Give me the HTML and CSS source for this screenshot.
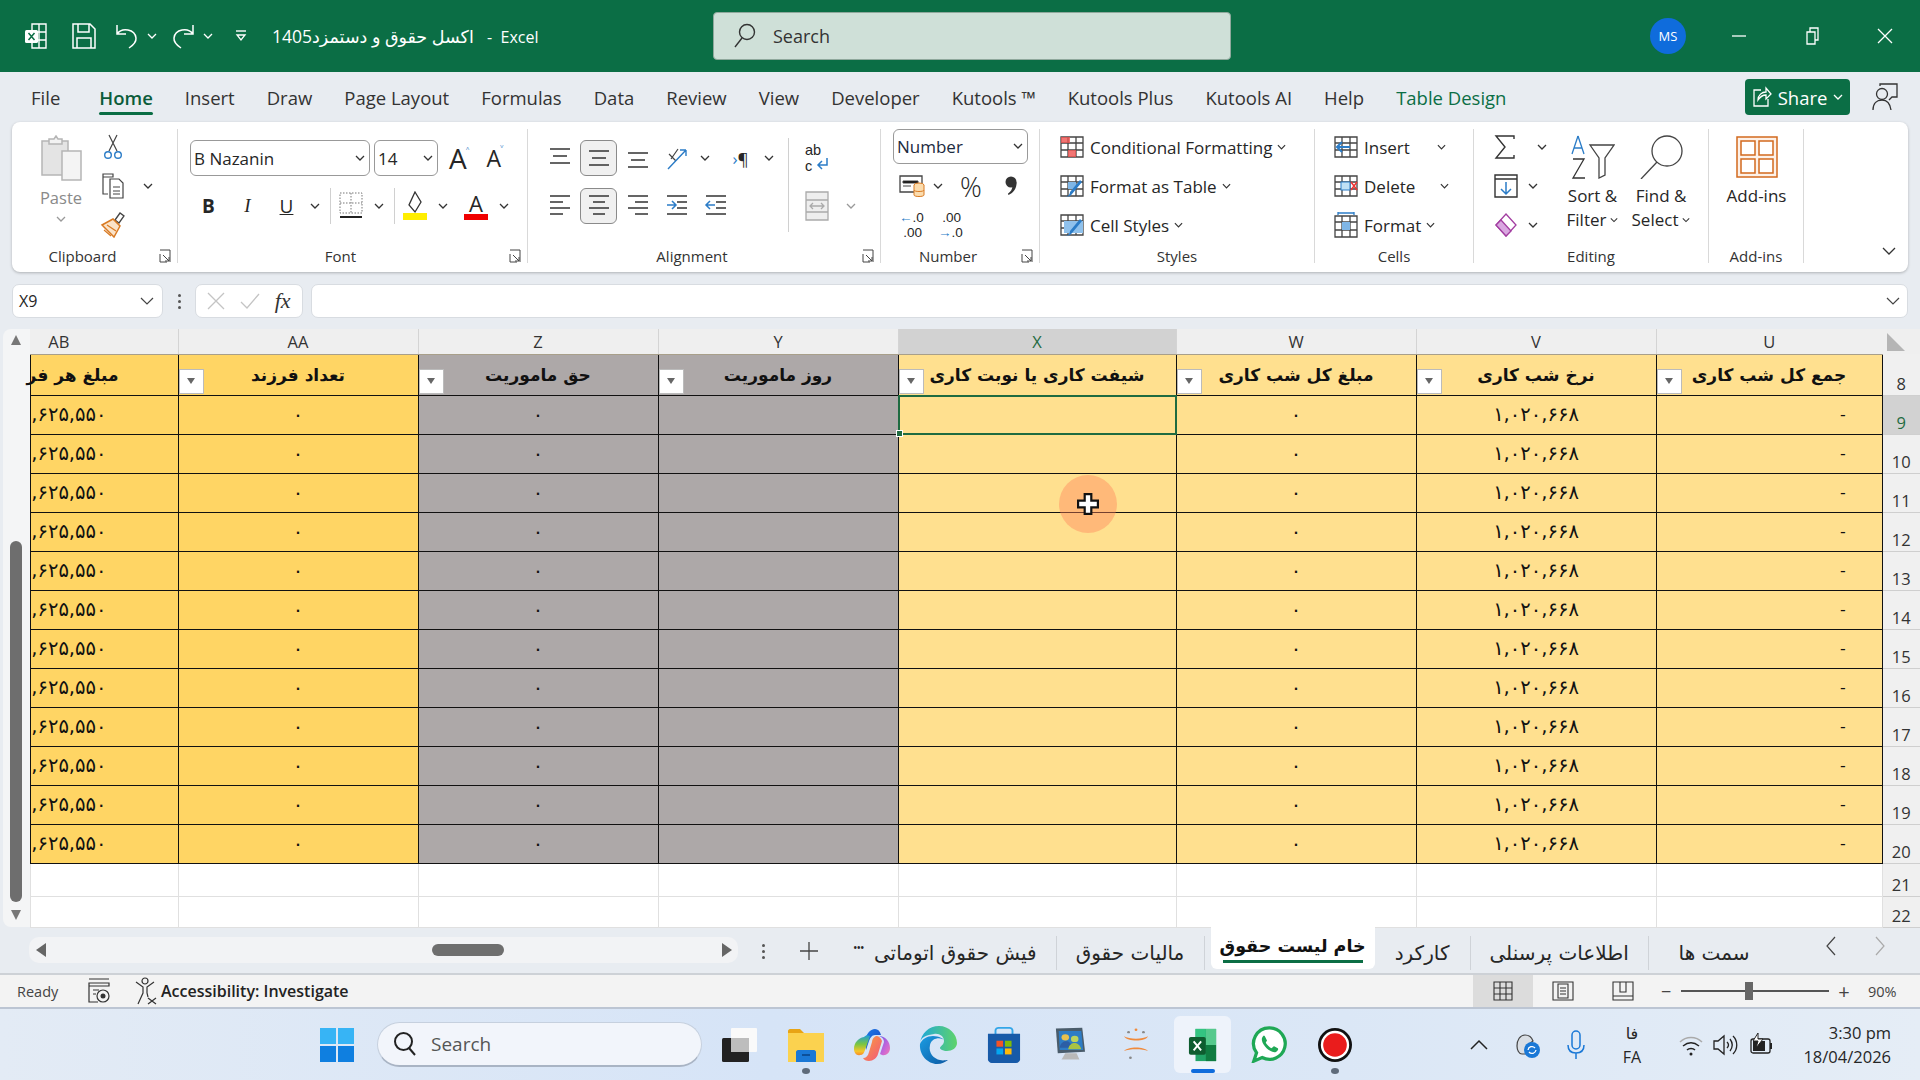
FILE: index.html
```html
<!DOCTYPE html>
<html lang="en">
<head>
    <meta charset="UTF-8">
    <title>Excel</title>
    <link rel="stylesheet" href="styles.css">
</head>
<body>
<svg class="defs" width="0" height="0">
    <defs>
        <linearGradient id="cp-left" x1="0" y1="0" x2="0" y2="1"><stop offset="0" stop-color="#1f9fd8"/><stop offset=".45" stop-color="#7cc63f"/><stop offset=".8" stop-color="#f7c52a"/><stop offset="1" stop-color="#f58a2b"/></linearGradient>
        <linearGradient id="cp-top" x1="0" y1="0" x2="1" y2="1"><stop offset="0" stop-color="#1d7be6"/><stop offset="1" stop-color="#1747c9"/></linearGradient>
        <linearGradient id="cp-right" x1="0" y1="0" x2="1" y2="1"><stop offset="0" stop-color="#6f5bea"/><stop offset=".6" stop-color="#c767d8"/><stop offset="1" stop-color="#f27ab0"/></linearGradient>
        <linearGradient id="cp-bot" x1="0" y1="0" x2="1" y2="1"><stop offset="0" stop-color="#f9a13a"/><stop offset="1" stop-color="#f2567e"/></linearGradient>
        <linearGradient id="edge-a" x1="0" y1="0" x2="1" y2="1"><stop offset="0" stop-color="#1b9de2"/><stop offset="1" stop-color="#0c59a4"/></linearGradient>
        <linearGradient id="edge-b" x1="0" y1="0" x2="1" y2="0"><stop offset="0" stop-color="#1fa8d8"/><stop offset="1" stop-color="#5fd36a"/></linearGradient>
    </defs>
    <symbol id="chev" viewBox="0 0 10 6"><path d="M1 1l4 4 4-4" fill="none" stroke="#333" stroke-width="1.3"/></symbol>
    <symbol id="lines-top" viewBox="0 0 24 24"><path d="M2 3h20M5 10h14M2 17h20" fill="none" stroke="#333" stroke-width="1.6"/></symbol>
    <symbol id="lines-mid" viewBox="0 0 24 24"><path d="M2 5h20M5 12h14M2 19h20" fill="none" stroke="#333" stroke-width="1.6"/></symbol>
    <symbol id="lines-bot" viewBox="0 0 24 24"><path d="M2 7h20M5 14h14M2 21h20" fill="none" stroke="#333" stroke-width="1.6"/></symbol>
    <symbol id="lines-left" viewBox="0 0 24 24"><path d="M2 2h20M2 8h13M2 14h20M2 20h13" fill="none" stroke="#333" stroke-width="1.6"/></symbol>
    <symbol id="lines-center" viewBox="0 0 24 24"><path d="M2 2h20M6 8h12M2 14h20M6 20h12" fill="none" stroke="#333" stroke-width="1.6"/></symbol>
    <symbol id="lines-right" viewBox="0 0 24 24"><path d="M2 2h20M9 8h13M2 14h20M9 20h13" fill="none" stroke="#333" stroke-width="1.6"/></symbol>
    <symbol id="table-grid" viewBox="0 0 24 24"><path d="M1 2h22v20H1zM1 8h22M1 15h22M8 2v20M16 2v20" fill="none" stroke="#444" stroke-width="1.3"/></symbol>
    <symbol id="filter-btn" viewBox="0 0 10 8"><path d="M1 1h8L5 7z" fill="#666"/></symbol>
    <symbol id="launcher" viewBox="0 0 12 14"><path d="M1 1h10v12M1 5v8h7M4 6l6 6M10 8v4H6" fill="none" stroke="#444" stroke-width="1"/></symbol>
</svg>

<header class="titlebar">
    <div class="qat">
        <svg class="qat-logo" width="24" height="26" viewBox="0 0 24 26"><path d="M8 1h14v24H8zM8 9h14M8 17h14M15 1v24" fill="none" stroke="#fff" stroke-width="1.4"/><rect x="1" y="7" width="13" height="13" rx="1.5" fill="#fff"/><path d="M4.5 10l6 7M10.5 10l-6 7" stroke="#0b6e45" stroke-width="1.5"/></svg>
        <svg class="qat-save" width="24" height="26" viewBox="0 0 24 26"><path d="M1 1h17l5 5v19H1zM6 1v8h11V1M5 25V15h14v10" fill="none" stroke="#fff" stroke-width="1.5"/></svg>
        <svg class="qat-undo" width="24" height="26" viewBox="0 0 24 26"><path d="M2 2v9h9M2 11c5-7 18-5 19 4 .5 5-4 8-7 10" fill="none" stroke="#fff" stroke-width="1.5"/></svg>
        <svg class="qat-chev" width="10" height="6"><path d="M1 1l4 4 4-4" fill="none" stroke="#fff" stroke-width="1.3"/></svg>
        <svg class="qat-redo" width="24" height="26" viewBox="0 0 24 26"><path d="M22 2v9h-9M22 11C17 4 4 6 3 15c-.5 5 4 8 7 10" fill="none" stroke="#fff" stroke-width="1.5"/></svg>
        <svg class="qat-chev" width="10" height="6"><path d="M1 1l4 4 4-4" fill="none" stroke="#fff" stroke-width="1.3"/></svg>
        <svg class="qat-custom" width="12" height="12" viewBox="0 0 12 12"><path d="M1 1h10" stroke="#fff" stroke-width="1.4"/><path d="M2 5h8L6 10z" fill="none" stroke="#fff" stroke-width="1.3"/></svg>
    </div>
    <div class="doc-title"><span class="doc-fa">اکسل حقوق و دستمزد1405</span>&nbsp; - &nbsp;Excel</div>
    <div class="searchbox">
        <svg width="24" height="26" viewBox="0 0 24 26"><circle cx="14" cy="9" r="7.5" fill="none" stroke="#333" stroke-width="1.4"/><path d="M9 15L2 24" stroke="#333" stroke-width="1.4"/></svg>
        <span>Search</span>
    </div>
    <div class="avatar">MS</div>
    <div class="winbtns">
        <svg width="16" height="16" viewBox="0 0 16 16"><path d="M1 8h14" stroke="#fff" stroke-width="1.3"/></svg>
        <svg width="16" height="18" viewBox="0 0 16 18"><path d="M3 5h8v12H3zM6 5V1h8v12h-3" fill="none" stroke="#fff" stroke-width="1.3"/></svg>
        <svg width="16" height="16" viewBox="0 0 16 16"><path d="M1 1l14 14M15 1L1 15" stroke="#fff" stroke-width="1.3"/></svg>
    </div>
</header>

<nav class="tabs">
    <a>File</a>
    <a class="tab-on">Home</a>
    <a>Insert</a>
    <a>Draw</a>
    <a>Page Layout</a>
    <a>Formulas</a>
    <a>Data</a>
    <a>Review</a>
    <a>View</a>
    <a>Developer</a>
    <a>Kutools ™</a>
    <a>Kutools Plus</a>
    <a>Kutools AI</a>
    <a>Help</a>
    <a class="tab-design">Table Design</a>
    <div class="share">
        <svg width="20" height="22" viewBox="0 0 20 22"><path d="M9 4H2v16h14v-7M6 14c0-5 4-8 8-8V2l5 6-5 5V9c-3 0-6 2-8 5z" fill="none" stroke="#fff" stroke-width="1.3"/></svg>
        <span>Share</span>
        <svg width="10" height="6"><path d="M1 1l4 4 4-4" fill="none" stroke="#fff" stroke-width="1.3"/></svg>
    </div>
    <svg class="comment-ic" width="26" height="28" viewBox="0 0 26 28"><circle cx="10" cy="11" r="5.5" fill="none" stroke="#333" stroke-width="1.3"/><path d="M1 27c0-7 4-10 9-10s8 3 9 10M8 3V1h17v13h-5l-3 3" fill="none" stroke="#333" stroke-width="1.3"/></svg>
</nav>

<section class="ribbon">
    <div class="group g-clip">
        <div class="grp-body">
            <div class="paste">
                <svg width="42" height="46" viewBox="0 0 42 46"><path d="M2 6h26v34H2z" fill="#e4e4e4" stroke="#b5b5b5" stroke-width="1.5"/><path d="M9 7V4h5l2-3 2 3h4v5H9z" fill="#f2f2f2" stroke="#b5b5b5" stroke-width="1.5"/><path d="M22 16h19v29H22z" fill="#f4f4f4" stroke="#b5b5b5" stroke-width="1.5"/></svg>
                <span class="paste-txt">Paste</span>
                <svg class="chev" width="10" height="6" viewBox="0 0 10 6"><path d="M1 1l4 4 4-4" fill="none" stroke="#999" stroke-width="1.3"/></svg>
            </div>
            <div class="rows3">
                <div class="row">
                    <svg class="ic26" width="26" height="26" viewBox="0 0 26 26"><path d="M9 1l8 16M17 1L9 17" stroke="#444" stroke-width="1.2"/><circle cx="8" cy="21" r="3.3" fill="none" stroke="#2b7cc7" stroke-width="1.4"/><circle cx="18" cy="21" r="3.3" fill="none" stroke="#2b7cc7" stroke-width="1.4"/></svg>
                </div>
                <div class="row">
                    <svg class="ic26" width="26" height="26" viewBox="0 0 26 26"><path d="M3 1h10v3H3zM3 1v20h5M10 6h9l4 4v15H10zM13 14h7M13 18h7M13 21h7" fill="none" stroke="#444" stroke-width="1.2"/></svg>
                    <svg class="chev chev-copy" width="10" height="6"><use href="#chev"/></svg>
                </div>
                <div class="row">
                    <svg class="ic26" width="26" height="26" viewBox="0 0 26 26"><path d="M15 8l5-7 4 3-5 7z" fill="none" stroke="#444" stroke-width="1.3"/><path d="M2 13l11-6 7 7-6 11z" fill="#fbe3c8" stroke="#d97a22" stroke-width="1.5"/><path d="M7 13l9 6M4 18l7 6" stroke="#d97a22" stroke-width="1.2"/></svg>
                </div>
            </div>
        </div>
        <div class="grp-foot"><span class="grp-name">Clipboard</span><span class="launch"><svg width="12" height="14"><use href="#launcher"/></svg></span></div>
    </div>

    <div class="group g-font">
        <div class="grp-body rows2">
            <div class="row">
                <div class="combo combo-font">B Nazanin<svg width="10" height="6"><use href="#chev"/></svg></div>
                <div class="combo combo-size">14<svg width="10" height="6"><use href="#chev"/></svg></div>
                <span class="grow-a">A<sup>˄</sup></span>
                <span class="shrink-a">A<sup>˅</sup></span>
            </div>
            <div class="row row-font2">
                <span class="slot fmt-b">B</span>
                <span class="slot fmt-i">I</span>
                <span class="slot fmt-u">U</span>
                <span class="chev-slot"><svg width="10" height="6"><use href="#chev"/></svg></span>
                <i class="vsep"></i>
                <svg width="24" height="28" viewBox="0 0 24 28"><path d="M1 1h22v20H1zM12 1v20M1 11h22" fill="none" stroke="#777" stroke-width="1" stroke-dasharray="1.5 1.5"/><path d="M1 25h22" stroke="#222" stroke-width="2"/></svg>
                <span class="chev-slot"><svg width="10" height="6"><use href="#chev"/></svg></span>
                <i class="vsep"></i>
                <svg width="24" height="30" viewBox="0 0 24 30"><path d="M12 1l6 10-6 10-6-7z" fill="none" stroke="#333" stroke-width="1.3"/><path d="M0 22h24v7H0z" fill="#ffee00"/></svg>
                <span class="chev-slot"><svg width="10" height="6"><use href="#chev"/></svg></span>
                <span class="font-color"><b>A</b><i></i></span>
                <span class="chev-slot"><svg width="10" height="6"><use href="#chev"/></svg></span>
            </div>
        </div>
        <div class="grp-foot"><span class="grp-name">Font</span><span class="launch"><svg width="12" height="14"><use href="#launcher"/></svg></span></div>
    </div>

    <div class="group g-align">
        <div class="grp-body">
            <div class="rows2">
                <div class="row">
                    <span class="slot"><svg width="24" height="24"><use href="#lines-top"/></svg></span>
                    <span class="slot slot-on"><svg width="24" height="24"><use href="#lines-mid"/></svg></span>
                    <span class="slot"><svg width="24" height="24"><use href="#lines-bot"/></svg></span>
                    <span class="slot"><svg width="26" height="26" viewBox="0 0 26 26"><path d="M7 14L14 4M5 9l7 7" fill="none" stroke="#444" stroke-width="1.2"/><path d="M4 24L22 5M22 5h-6M22 5v6" fill="none" stroke="#2b7cc7" stroke-width="1.4"/></svg></span>
                    <span class="chev-slot"><svg width="10" height="6"><use href="#chev"/></svg></span>
                    <span class="slot slot-para"><span class="para-blue">›</span>¶</span>
                    <span class="chev-slot"><svg width="10" height="6"><use href="#chev"/></svg></span>
                </div>
                <div class="row">
                    <span class="slot"><svg width="24" height="24"><use href="#lines-left"/></svg></span>
                    <span class="slot slot-on"><svg width="24" height="24"><use href="#lines-center"/></svg></span>
                    <span class="slot"><svg width="24" height="24"><use href="#lines-right"/></svg></span>
                    <span class="slot"><svg width="24" height="24" viewBox="0 0 24 24"><path d="M2 2h20M12 8h10M12 14h10M2 20h20" stroke="#333" stroke-width="1.5"/><path d="M2 11h8M7 7l4 4-4 4" fill="none" stroke="#2b7cc7" stroke-width="1.5"/></svg></span>
                    <span class="slot"><svg width="24" height="24" viewBox="0 0 24 24"><path d="M2 2h20M12 8h10M12 14h10M2 20h20" stroke="#333" stroke-width="1.5"/><path d="M11 11H2M6 7l-4 4 4 4" fill="none" stroke="#2b7cc7" stroke-width="1.5"/></svg></span>
                </div>
            </div>
            <i class="tall-sep"></i>
            <div class="rows2">
                <div class="row">
                    <span class="wrap-txt">ab<br>c</span>
                    <svg class="wrap-arrow" width="14" height="14" viewBox="0 0 14 14"><path d="M12 1v7H3M7 4L3 8l4 4" fill="none" stroke="#2b7cc7" stroke-width="1.5"/></svg>
                </div>
                <div class="row">
                    <svg width="24" height="30" viewBox="0 0 24 30"><path d="M1 1h22v28H1zM1 9h22M1 21h22" fill="#eee" stroke="#aaa" stroke-width="1.3"/><path d="M5 15h14M8 12l-3 3 3 3M16 12l3 3-3 3" fill="none" stroke="#aaa" stroke-width="1.3"/></svg>
                    <span class="chev-merge"><svg width="10" height="6" viewBox="0 0 10 6"><path d="M1 1l4 4 4-4" fill="none" stroke="#999" stroke-width="1.3"/></svg></span>
                </div>
            </div>
        </div>
        <div class="grp-foot"><span class="grp-name">Alignment</span><span class="launch"><svg width="12" height="14"><use href="#launcher"/></svg></span></div>
    </div>

    <div class="group g-number">
        <div class="grp-body rows3">
            <div class="row"><div class="combo combo-num">Number<svg width="10" height="6"><use href="#chev"/></svg></div></div>
            <div class="row num-row2">
                <svg width="26" height="24" viewBox="0 0 26 24"><path d="M1 2h22v16H1z" fill="none" stroke="#444" stroke-width="1.3"/><path d="M4 7h15v2H4zM4 12h8" stroke="#444"/><ellipse cx="20" cy="11" rx="5" ry="2" fill="#fbdcae" stroke="#d97a22"/><path d="M15 11v10c0 2 10 2 10 0V11M15 16c0 2 10 2 10 0" fill="#fbdcae" stroke="#d97a22"/></svg>
                <span class="chev-slot"><svg width="10" height="6"><use href="#chev"/></svg></span>
                <span class="percent">%</span>
                <svg class="comma" width="12" height="20" viewBox="0 0 12 20"><circle cx="6" cy="6" r="5.5" fill="#333"/><path d="M11.5 6c.5 6-3 11-8 13l-.6-1.2c3-2 4.600-5 4.600-8z" fill="#333"/></svg>
            </div>
            <div class="row num-row3">
                <span class="dec"><em>←</em>.0<br>.00</span>
                <span class="dec">.00<br><em>→</em>.0</span>
            </div>
        </div>
        <div class="grp-foot"><span class="grp-name">Number</span><span class="launch"><svg width="12" height="14"><use href="#launcher"/></svg></span></div>
    </div>

    <div class="group g-styles">
        <div class="grp-body rows3">
            <div class="row">
                <svg width="24" height="24" viewBox="0 0 24 24"><use href="#table-grid"/><path d="M1 2h9v6H1zM8 15h8v7H8z" fill="#ef5350" opacity=".8"/></svg>
                <span class="cmd">Conditional Formatting</span><svg class="cmd-chev" width="10" height="6"><use href="#chev"/></svg>
            </div>
            <div class="row">
                <svg width="24" height="24" viewBox="0 0 24 24"><use href="#table-grid"/><path d="M8 8h8v7H8z" fill="#7fb6e6"/><path d="M5 23c3 0 5-3 5-5l10-12 2 2-10 12c-1 2-4 3-7 3z" fill="#2b7cc7"/></svg>
                <span class="cmd">Format as Table</span><svg class="cmd-chev" width="10" height="6"><use href="#chev"/></svg>
            </div>
            <div class="row">
                <svg width="24" height="24" viewBox="0 0 24 24"><use href="#table-grid"/><path d="M4 8h19v12H4z" fill="#8fc1ec"/><path d="M5 23c3 0 5-3 5-5l10-12 2 2-10 12c-1 2-4 3-7 3z" fill="#2b7cc7"/></svg>
                <span class="cmd">Cell Styles</span><svg class="cmd-chev" width="10" height="6"><use href="#chev"/></svg>
            </div>
        </div>
        <div class="grp-foot"><span class="grp-name">Styles</span></div>
    </div>

    <div class="group g-cells">
        <div class="grp-body rows3">
            <div class="row">
                <svg width="24" height="24" viewBox="0 0 24 24"><use href="#table-grid"/><path d="M16 12H3M8 7l-5 5 5 5" fill="none" stroke="#2b7cc7" stroke-width="2"/></svg>
                <span class="cmd">Insert</span><svg class="cmd-chev chev-ins" width="10" height="6"><use href="#chev"/></svg>
            </div>
            <div class="row">
                <svg width="24" height="24" viewBox="0 0 24 24"><use href="#table-grid"/><rect x="7" y="8" width="9" height="8" fill="#bfe0f5" stroke="#2b7cc7"/><path d="M17 8l6 8M23 8l-6 8" stroke="#e33" stroke-width="1.5"/></svg>
                <span class="cmd">Delete</span><svg class="cmd-chev chev-del" width="10" height="6"><use href="#chev"/></svg>
            </div>
            <div class="row">
                <svg width="24" height="26" viewBox="0 0 24 26"><path d="M1 4h22v21H1zM1 10h22M1 18h22M8 4v21M16 4v21" fill="none" stroke="#444" stroke-width="1.3"/><path d="M8 10h8v8H8z" fill="#7fb6e6"/><path d="M4 1h16M4 0v3M20 0v3" stroke="#2b7cc7" stroke-width="1.3"/></svg>
                <span class="cmd">Format</span><svg class="cmd-chev" width="10" height="6"><use href="#chev"/></svg>
            </div>
        </div>
        <div class="grp-foot"><span class="grp-name">Cells</span></div>
    </div>

    <div class="group g-edit">
        <div class="grp-body">
            <div class="rows3 edit-col">
                <div class="row"><svg width="22" height="24" viewBox="0 0 22 24"><path d="M20 4V1H2l9 11-9 11h18v-3" fill="none" stroke="#333" stroke-width="1.4"/></svg><svg class="chev-sum" width="10" height="6"><use href="#chev"/></svg></div>
                <div class="row"><svg width="24" height="24" viewBox="0 0 24 24"><path d="M1 1h22v22H1zM1 5h22" fill="none" stroke="#333" stroke-width="1.4"/><path d="M12 8v12M7 15l5 5 5-5" fill="none" stroke="#2b7cc7" stroke-width="1.5"/></svg><svg class="chev-fill" width="10" height="6"><use href="#chev"/></svg></div>
                <div class="row"><svg width="24" height="24" viewBox="0 0 24 24"><path d="M12 1l10 11-10 11L2 12z" fill="#fff" stroke="#a33ea1" stroke-width="1.3"/><path d="M2 12l5-5 10 11-5 5z" fill="#d9a7e0" stroke="#a33ea1" stroke-width="1.3"/></svg><svg class="chev-fill" width="10" height="6"><use href="#chev"/></svg></div>
            </div>
            <div class="bigbtn big-sort">
                <svg class="bigicon" width="44" height="44" viewBox="0 0 44 44"><path d="M19 10h24l-9 13v17l-6 3V23z" fill="none" stroke="#444" stroke-width="1.3"/><path d="M7 1L1 19M7 1l6 18M3 13h8" fill="none" stroke="#2b7cc7" stroke-width="1.3"/><path d="M2 24h11L2 43h12" fill="none" stroke="#333" stroke-width="1.3"/></svg>
                <span>Sort &amp;</span>
                <span>Filter<svg width="8" height="6"><use href="#chev"/></svg></span>
            </div>
            <div class="bigbtn big-find">
                <svg class="bigicon" width="46" height="44" viewBox="0 0 46 44"><circle cx="29" cy="16" r="15" fill="none" stroke="#444" stroke-width="1.3"/><path d="M19 27L3 44" stroke="#444" stroke-width="1.3"/></svg>
                <span>Find &amp;</span>
                <span>Select<svg width="8" height="6"><use href="#chev"/></svg></span>
            </div>
        </div>
        <div class="grp-foot"><span class="grp-name">Editing</span></div>
    </div>

    <div class="group g-addins">
        <div class="grp-body">
            <div class="bigbtn big-add">
                <svg class="bigicon" width="42" height="42" viewBox="0 0 42 42"><rect x="1" y="1" width="40" height="40" fill="#fdf1e8" stroke="#d2691e" stroke-width="1.5"/><path d="M5 5h14v14H5zM23 5h14v14H23zM5 23h14v14H5zM23 23h14v14H23z" fill="#fff" stroke="#d2691e" stroke-width="1.5"/></svg>
                <span>Add-ins</span>
            </div>
        </div>
        <div class="grp-foot"><span class="grp-name">Add-ins</span></div>
    </div>

    <svg class="collapse" width="14" height="9" viewBox="0 0 14 9"><path d="M1 1l6 6 6-6" fill="none" stroke="#333" stroke-width="1.3"/></svg>
</section>

<section class="formula">
    <div class="namebox"><span>X9</span><svg width="14" height="8" viewBox="0 0 14 8"><path d="M1 1l6 6 6-6" fill="none" stroke="#444" stroke-width="1.2"/></svg></div>
    <div class="fdots"><i></i><i></i><i></i></div>
    <div class="fxbox">
        <svg width="18" height="18" viewBox="0 0 18 18"><path d="M1 1l16 16M17 1L1 17" stroke="#c4c4c4" stroke-width="1.3"/></svg>
        <svg width="20" height="16" viewBox="0 0 20 16"><path d="M1 9l6 6L19 1" fill="none" stroke="#c4c4c4" stroke-width="1.3"/></svg>
        <span class="fx">fx</span>
    </div>
    <div class="finput"><svg width="14" height="8" viewBox="0 0 14 8"><path d="M1 1l6 6 6-6" fill="none" stroke="#444" stroke-width="1.2"/></svg></div>
</section>

<section class="sheet">
    <div class="vscroll">
        <svg width="12" height="10" viewBox="0 0 12 10"><path d="M1 10L6 0l5 10z" fill="#777"/></svg>
        <div class="vthumb"></div>
        <svg width="12" height="10" viewBox="0 0 12 10"><path d="M1 0h10L6 10z" fill="#777"/></svg>
    </div>
    <table class="grid">
        <colgroup>
            <col class="c-ab"><col class="c-std"><col class="c-std"><col class="c-std"><col class="c-x"><col class="c-std"><col class="c-std"><col class="c-u"><col class="c-num">
        </colgroup>
        <tr class="letters">
            <th class="col-ab">AB</th><th>AA</th><th>Z</th><th>Y</th><th class="sel-head">X</th><th>W</th><th>V</th><th>U</th>
            <th class="corner"><svg width="18" height="18" viewBox="0 0 18 18"><path d="M0 0l18 18H0z" fill="#b5b5b5"/></svg></th>
        </tr>
        <tr class="heads">
            <td><div class="clip">مبلغ هر فر</div></td>
            <td><i class="fbtn"><svg width="10" height="8"><use href="#filter-btn"/></svg></i>تعداد فرزند</td>
            <td class="gray"><i class="fbtn"><svg width="10" height="8"><use href="#filter-btn"/></svg></i>حق ماموریت</td>
            <td class="gray"><i class="fbtn"><svg width="10" height="8"><use href="#filter-btn"/></svg></i>روز ماموریت</td>
            <td class="light"><i class="fbtn"><svg width="10" height="8"><use href="#filter-btn"/></svg></i>شیفت کاری یا نوبت کاری</td>
            <td class="light"><i class="fbtn"><svg width="10" height="8"><use href="#filter-btn"/></svg></i>مبلغ کل شب کاری</td>
            <td class="light"><i class="fbtn"><svg width="10" height="8"><use href="#filter-btn"/></svg></i>نرخ شب کاری</td>
            <td class="light"><i class="fbtn"><svg width="10" height="8"><use href="#filter-btn"/></svg></i>جمع کل شب کاری</td>
            <td class="rownum">8</td>
        </tr>
        <tr class="data"><td><div class="clip num-clip">,۶۲۵,۵۵۰</div></td><td>۰</td><td class="gray">۰</td><td class="gray"></td><td class="light sel-cell"><div class="sel-box"><i></i></div></td><td class="light">۰</td><td class="light">۱,۰۲۰,۶۶۸</td><td class="light dash">-</td><td class="rownum sel-num">9</td></tr>
        <tr class="data"><td><div class="clip num-clip">,۶۲۵,۵۵۰</div></td><td>۰</td><td class="gray">۰</td><td class="gray"></td><td class="light"></td><td class="light">۰</td><td class="light">۱,۰۲۰,۶۶۸</td><td class="light dash">-</td><td class="rownum">10</td></tr>
        <tr class="data"><td><div class="clip num-clip">,۶۲۵,۵۵۰</div></td><td>۰</td><td class="gray">۰</td><td class="gray"></td><td class="light cursor-cell"><div class="cursor"><svg width="22" height="22" viewBox="0 0 20 20"><path d="M7 1h6v6h6v6h-6v6H7v-6H1V7h6z" fill="#fff" stroke="#111" stroke-width="2"/></svg></div></td><td class="light">۰</td><td class="light">۱,۰۲۰,۶۶۸</td><td class="light dash">-</td><td class="rownum">11</td></tr>
        <tr class="data"><td><div class="clip num-clip">,۶۲۵,۵۵۰</div></td><td>۰</td><td class="gray">۰</td><td class="gray"></td><td class="light"></td><td class="light">۰</td><td class="light">۱,۰۲۰,۶۶۸</td><td class="light dash">-</td><td class="rownum">12</td></tr>
        <tr class="data"><td><div class="clip num-clip">,۶۲۵,۵۵۰</div></td><td>۰</td><td class="gray">۰</td><td class="gray"></td><td class="light"></td><td class="light">۰</td><td class="light">۱,۰۲۰,۶۶۸</td><td class="light dash">-</td><td class="rownum">13</td></tr>
        <tr class="data"><td><div class="clip num-clip">,۶۲۵,۵۵۰</div></td><td>۰</td><td class="gray">۰</td><td class="gray"></td><td class="light"></td><td class="light">۰</td><td class="light">۱,۰۲۰,۶۶۸</td><td class="light dash">-</td><td class="rownum">14</td></tr>
        <tr class="data"><td><div class="clip num-clip">,۶۲۵,۵۵۰</div></td><td>۰</td><td class="gray">۰</td><td class="gray"></td><td class="light"></td><td class="light">۰</td><td class="light">۱,۰۲۰,۶۶۸</td><td class="light dash">-</td><td class="rownum">15</td></tr>
        <tr class="data"><td><div class="clip num-clip">,۶۲۵,۵۵۰</div></td><td>۰</td><td class="gray">۰</td><td class="gray"></td><td class="light"></td><td class="light">۰</td><td class="light">۱,۰۲۰,۶۶۸</td><td class="light dash">-</td><td class="rownum">16</td></tr>
        <tr class="data"><td><div class="clip num-clip">,۶۲۵,۵۵۰</div></td><td>۰</td><td class="gray">۰</td><td class="gray"></td><td class="light"></td><td class="light">۰</td><td class="light">۱,۰۲۰,۶۶۸</td><td class="light dash">-</td><td class="rownum">17</td></tr>
        <tr class="data"><td><div class="clip num-clip">,۶۲۵,۵۵۰</div></td><td>۰</td><td class="gray">۰</td><td class="gray"></td><td class="light"></td><td class="light">۰</td><td class="light">۱,۰۲۰,۶۶۸</td><td class="light dash">-</td><td class="rownum">18</td></tr>
        <tr class="data"><td><div class="clip num-clip">,۶۲۵,۵۵۰</div></td><td>۰</td><td class="gray">۰</td><td class="gray"></td><td class="light"></td><td class="light">۰</td><td class="light">۱,۰۲۰,۶۶۸</td><td class="light dash">-</td><td class="rownum">19</td></tr>
        <tr class="data"><td><div class="clip num-clip">,۶۲۵,۵۵۰</div></td><td>۰</td><td class="gray">۰</td><td class="gray"></td><td class="light"></td><td class="light">۰</td><td class="light">۱,۰۲۰,۶۶۸</td><td class="light dash">-</td><td class="rownum">20</td></tr>
        <tr class="blank r21"><td></td><td></td><td></td><td></td><td></td><td></td><td></td><td></td><td class="rownum">21</td></tr>
        <tr class="blank r22"><td></td><td></td><td></td><td></td><td></td><td></td><td></td><td></td><td class="rownum">22</td></tr>
    </table>
</section>

<section class="sheetbar">
    <div class="hscroll">
        <svg width="10" height="14" viewBox="0 0 10 14"><path d="M10 0v14L0 7z" fill="#666"/></svg>
        <div class="hthumb"></div>
        <svg width="10" height="14" viewBox="0 0 10 14"><path d="M0 0v14l10-7z" fill="#666"/></svg>
    </div>
    <div class="vdots"><i></i><i></i><i></i></div>
    <svg class="addsheet" width="18" height="18" viewBox="0 0 18 18"><path d="M9 0v18M0 9h18" stroke="#444" stroke-width="1.3"/></svg>
    <span class="moretabs">•••</span>
    <div class="sheet-tabs">
        <div class="stab st-fish">فیش حقوق اتوماتی</div>
        <div class="stab st-tax">مالیات حقوق</div>
        <div class="stab st-raw">خام لیست حقوق</div>
        <div class="stab st-work">کارکرد</div>
        <div class="stab st-info">اطلاعات پرسنلی</div>
        <div class="stab st-role">سمت ها</div>
    </div>
    <svg class="tabarrow" width="10" height="20" viewBox="0 0 10 20"><path d="M9 1L1 10l8 9" fill="none" stroke="#444" stroke-width="1.2"/></svg>
    <svg class="tabarrow tabarrow2" width="10" height="20" viewBox="0 0 10 20"><path d="M1 1l8 9-8 9" fill="none" stroke="#aaa" stroke-width="1.2"/></svg>
</section>

<footer class="statusbar">
    <span class="ready">Ready</span>
    <svg class="st-ic" width="22" height="26" viewBox="0 0 22 26"><path d="M1 1h20M1 5h20v3H1zM1 8v16h9M5 12h6M5 16h3" fill="none" stroke="#333" stroke-width="1.2"/><circle cx="15" cy="18" r="6" fill="none" stroke="#333" stroke-width="1.2"/><circle cx="15" cy="18" r="2.5" fill="#333"/></svg>
    <svg class="st-acc" width="24" height="28" viewBox="0 0 24 28"><circle cx="11" cy="4" r="3" fill="none" stroke="#333" stroke-width="1.2"/><path d="M2 5l7 5v6L4 27M20 5l-7 5v6l1 4M14 21l8 6M22 21l-8 6" fill="none" stroke="#333" stroke-width="1.2"/></svg>
    <b class="acc-txt">Accessibility: Investigate</b>
    <div class="viewbtns">
        <span class="vb vb-on"><svg width="20" height="20" viewBox="0 0 20 20"><path d="M1 1h18v18H1zM1 7h18M1 13h18M7 1v18M13 1v18" fill="none" stroke="#333" stroke-width="1.1"/></svg></span>
        <span class="vb"><svg width="22" height="20" viewBox="0 0 22 20"><path d="M1 1h20v18H1z" fill="none" stroke="#333" stroke-width="1.1"/><path d="M6 3h10v14H6zM8 7h6M8 10h6M8 13h6" fill="none" stroke="#333" stroke-width="1.1"/></svg></span>
        <span class="vb"><svg width="22" height="20" viewBox="0 0 22 20"><path d="M1 1h20v18H1zM8 1v10h6V1M1 15h20" fill="none" stroke="#333" stroke-width="1.1"/></svg></span>
    </div>
    <span class="zoom-minus">−</span>
    <div class="zoomtrack"><i></i></div>
    <span class="zoom-plus">+</span>
    <span class="zoom-val">90%</span>
</footer>

<footer class="taskbar">
    <div class="app"><svg width="36" height="36" viewBox="0 0 36 36"><path d="M1 1h16v16H1z" fill="#37b4f5"/><path d="M19 1h16v16H19z" fill="#37b4f5"/><path d="M1 19h16v16H1z" fill="#0f7fe0"/><path d="M19 19h16v16H19z" fill="#0f7fe0"/></svg></div>
    <div class="tsearch">
        <svg width="24" height="26" viewBox="0 0 24 26"><circle cx="10.5" cy="10.5" r="8.5" fill="none" stroke="#222" stroke-width="2"/><path d="M16 17l6 7" stroke="#222" stroke-width="2"/></svg>
        <span>Search</span>
    </div>
    <div class="app"><svg width="36" height="34" viewBox="0 0 36 34"><rect x="9" y="0" width="26" height="24" rx="1" fill="#fafafa"/><rect x="0" y="10" width="27" height="24" rx="1.5" fill="#222"/><rect x="9" y="10" width="18" height="14" fill="#bdbdbd"/></svg></div>
    <div class="app app-dot"><svg width="38" height="34" viewBox="0 0 38 34"><path d="M1 3c0-1 1-2 2-2h10l4 4h-16z" fill="#e8a415"/><path d="M1 5h36v29H1z" fill="#fbd24f"/><path d="M9 24c0-1 1-2 2-2h16c1 0 2 1 2 2v10H9z" fill="#1a78d6"/><path d="M15 27h8" stroke="#0c4f99" stroke-width="2"/></svg></div>
    <div class="app"><svg width="36" height="34" viewBox="0 0 36 34"><path d="M11 13c1-7 5-12 10-12 3 0 5 2 6 6l-6 0c-3 0-5 3-6 6l-3 9z" fill="url(#cp-top)"/><path d="M10 9C4 10 0 15 0 21c0 4 3 7 6 6 3 0 4-2 5-5l5-14c-2-1-4-1-6 1z" fill="url(#cp-left)"/><path d="M25 8c6 0 11 5 11 12 0 5-4 8-8 7l-2-1 4-12c0-3-2-5-5-6z" fill="url(#cp-right)"/><path d="M22 8c3 0 5 2 6 5l-4 13c-1 4-5 7-9 7-3 0-5-1-6-3 3 0 5-2 6-6l3-10c0-3 2-5 4-6z" fill="url(#cp-bot)"/></svg></div>
    <div class="app"><svg width="38" height="38" viewBox="0 0 38 38"><path d="M1 18C2 7 10 0 20 0c10 0 18 8 18 17 0 5-5 8-10 8-4 0-7-2-7-3 0-2 4-3 4-7 0-5-5-8-10-7C8 9 1 11 1 18z" fill="url(#edge-b)"/><path d="M1 18c2-5 7-8 13-8s11 3 12 5c-3-4-13-4-15 4-2 8 4 14 10 15 3 1 6 0 8 0-3 2-6 4-11 4C9 38 0 29 1 18z" fill="url(#edge-a)"/></svg></div>
    <div class="app"><svg width="34" height="36" viewBox="0 0 36 42" preserveAspectRatio="none"><path d="M9 10V4c0-2 2-3 3-3h12c1 0 3 1 3 3v6" fill="none" stroke="#33a6e8" stroke-width="2"/><path d="M1 8h34v30c0 2-2 4-4 4H5c-2 0-4-2-4-4z" fill="#175aa8"/><path d="M10 16h7v7h-7z" fill="#f35325"/><path d="M19 16h7v7h-7z" fill="#81bc06"/><path d="M10 25h7v7h-7z" fill="#05a6f0"/><path d="M19 25h7v7h-7z" fill="#ffba08"/></svg></div>
    <div class="app"><svg width="32" height="35" viewBox="0 0 34 44" preserveAspectRatio="none"><path d="M2 2l28-1 3 30L4 33z" fill="#4a5c6b"/><path d="M5 5h24l2 24H6z" fill="#2d7cc5"/><circle cx="12" cy="13" r="4" fill="#e8c14f"/><path d="M6 26c1-6 4-8 7-8s5 2 6 8z" fill="#2b5ea6"/><circle cx="22" cy="15" r="4" fill="#bcd35c"/><path d="M15 28c1-6 4-8 7-8s6 3 7 8z" fill="#a8c344"/><path d="M12 33h12l3 8H8z" fill="#b9b9b9"/></svg></div>
    <div class="app"><svg width="26" height="33" viewBox="0 0 28 40" preserveAspectRatio="none"><path d="M1 10c6 4 20 4 26 0-3 7-22 7-26 0zM1 28c4-6 22-6 26 0-6-3-20-3-26 0z" fill="#f08a3c"/><circle cx="6" cy="5" r="1.5" fill="#888"/><circle cx="14" cy="2" r="1.5" fill="#f08a3c"/><circle cx="22" cy="5" r="1.5" fill="#888"/><circle cx="8" cy="36" r="1.5" fill="#888"/></svg></div>
    <div class="app app-excel"><svg width="30" height="34" viewBox="0 0 32 38" preserveAspectRatio="none"><path d="M8 1h22v36H8z" fill="#21a366"/><path d="M19 1h11v18H19z" fill="#56c98d"/><path d="M8 1h11v18H8z" fill="#33c481"/><path d="M19 19h11v18H19z" fill="#107c41"/><rect x="1" y="10" width="18" height="20" rx="2" fill="#0e5c2f"/><path d="M6 15l8 10M14 15L6 25" stroke="#fff" stroke-width="2"/></svg></div>
    <div class="app"><svg width="37" height="37" viewBox="0 0 38 40"><path d="M19 2a17 17 0 11-8 32L2 38l3-9A17 17 0 0119 2z" fill="#fff" stroke="#1fa855" stroke-width="3.5"/><path d="M12 11c-2 2-2 6 2 11s9 7 12 6c2-1 3-3 2-4l-4-2c-1 0-2 2-3 2-2-1-5-4-6-6 0-1 2-2 1-3l-2-4c-1-1-1-1-2 0z" fill="#1fa855"/></svg></div>
    <div class="app app-dot"><svg width="34" height="34" viewBox="0 0 36 36"><circle cx="18" cy="18" r="18" fill="#111"/><circle cx="18" cy="18" r="15" fill="#fff"/><circle cx="18" cy="18" r="12.5" fill="#ea1c1c"/></svg></div>
    <div class="tray">
        <svg class="tray-up" width="18" height="11" viewBox="0 0 18 11"><path d="M1 10l8-8 8 8" fill="none" stroke="#222" stroke-width="1.5"/></svg>
        <svg class="tray-cloud" width="26" height="30" viewBox="0 0 26 30"><path d="M2 16c0-6 3-11 8-11s7 3 8 6c-4 2-6 7-5 13H7c-3 0-5-4-5-8z" fill="#d9dee4" stroke="#444" stroke-width="1.2"/><circle cx="17" cy="20" r="8" fill="#1a78d6"/><path d="M13 20a4 4 0 017-2M21 20a4 4 0 01-7 2" fill="none" stroke="#fff" stroke-width="1.3"/></svg>
        <svg class="tray-mic" width="18" height="30" viewBox="0 0 18 30"><rect x="5" y="1" width="8" height="18" rx="4" fill="none" stroke="#1a78d6" stroke-width="1.5"/><path d="M1 15c0 5 3 8 8 8s8-3 8-8M9 23v6" fill="none" stroke="#1a78d6" stroke-width="1.5"/></svg>
        <div class="lang"><span>فا</span><span>FA</span></div>
        <svg class="tray-wifi" width="24" height="22" viewBox="0 0 24 22"><path d="M1 8c6-6 16-6 22 0" fill="none" stroke="#aaa" stroke-width="1.5"/><path d="M4 12c5-4 11-4 16 0M8 16c2-2 6-2 8 0" fill="none" stroke="#222" stroke-width="1.5"/><circle cx="12" cy="20" r="1.5" fill="#222"/></svg>
        <svg class="tray-vol" width="26" height="22" viewBox="0 0 26 22"><path d="M1 7h4l6-5v18l-6-5H1z" fill="none" stroke="#222" stroke-width="1.3"/><path d="M14 8c2 2 2 4 0 6M17 5c3 4 3 8 0 12M20 2c5 5 5 13 0 18" fill="none" stroke="#222" stroke-width="1.3"/></svg>
        <svg class="tray-bat" width="24" height="24" viewBox="0 0 24 24"><rect x="1" y="6" width="19" height="14" rx="2" fill="none" stroke="#222" stroke-width="1.3"/><rect x="3" y="8" width="12" height="10" fill="#222"/><path d="M21 10v6" stroke="#222" stroke-width="2"/><path d="M8 0L3 8h5l-2 7 7-9H8z" fill="#fff" stroke="#222"/></svg>
        <div class="clock"><span>3:30 pm</span><span>18/04/2026</span></div>
    </div>
</footer>
</body>
</html>
```

FILE: styles.css
```css
* {
    box-sizing: border-box;
}
html, body {
    margin: 0;
    padding: 0;
}
body {
    width: 1920px;
    height: 1080px;
    overflow: hidden;
    background: #e8ecf1;
    font-family: "Open Sans", "Noto Sans", "DejaVu Sans", sans-serif;
    font-size: 16px;
    color: #262626;
}
svg {
    flex: none;
    display: block;
}
.defs {
    position: absolute;
}

/* title bar */
.titlebar {
    height: 72px;
    background: #0b6e45;
    color: #fff;
    display: flex;
    align-items: center;
}
.qat {
    display: flex;
    align-items: center;
    width: 272px;
    padding-left: 24px;
}
.qat-save { margin-left: 24px; }
.qat-undo { margin-left: 19px; }
.qat-chev { margin-left: 8px; }
.qat-redo { margin-left: 14px; }
.qat-custom { margin-left: 22px; }
.doc-title {
    width: 441px;
    font-size: 16px;
    white-space: nowrap;
}
.doc-fa {
    font-size: 17.5px;
    margin-right: 5px;
}
.searchbox {
    width: 518px;
    height: 48px;
    background: #cfe0d8;
    border: 1px solid #8fa89c;
    border-radius: 4px;
    display: flex;
    align-items: center;
    padding-left: 19px;
    gap: 16px;
    color: #333;
    font-size: 18px;
}
.avatar {
    width: 36px;
    height: 36px;
    margin-left: 419px;
    border-radius: 50%;
    background: #0f6cdc;
    font-size: 13px;
    display: flex;
    align-items: center;
    justify-content: center;
}
.winbtns {
    display: flex;
    align-items: center;
    margin-left: 45px;
    gap: 57px;
}

/* tabs */
.tabs {
    height: 50px;
    display: flex;
    align-items: center;
    gap: 32px;
    padding: 0 22px 0 31px;
    font-size: 18.5px;
    white-space: nowrap;
}
.tabs a {
    position: relative;
    color: #333;
}
.tabs .tab-on {
    margin-left: 7px;
    font-weight: 600;
    color: #0b5c3a;
}
.tabs .tab-on::after {
    content: "";
    position: absolute;
    left: 0;
    right: 0;
    bottom: -5px;
    height: 3px;
    border-radius: 2px;
    background: #0b6e45;
}
.tabs .tab-design {
    color: #0b6e45;
}
.share {
    margin-left: auto;
    width: 105px;
    height: 36px;
    border-radius: 4px;
    background: #0b6e45;
    color: #fff;
    display: flex;
    align-items: center;
    justify-content: center;
    gap: 6px;
    flex: none;
}
.comment-ic {
    margin-left: -10px;
}

/* ribbon */
.ribbon {
    margin: 0 12px;
    height: 150px;
    background: #fff;
    border-radius: 8px;
    box-shadow: 0 1px 3px rgba(0, 0, 0, .25);
    display: flex;
    padding-top: 7px;
    font-size: 16.5px;
}
.group {
    height: 134px;
    border-right: 1px solid #d9d9d9;
    display: flex;
    flex-direction: column;
    flex: none;
}
.g-clip { width: 166px; }
.g-font { width: 350px; padding-left: 12px; }
.g-align { width: 353px; padding-left: 12px; }
.g-number { width: 159px; padding-left: 12px; }
.g-styles { width: 275px; padding-left: 20px; }
.g-cells { width: 159px; padding-left: 19px; }
.g-edit { width: 235px; padding-left: 20px; }
.g-addins { width: 95px; }
.grp-body {
    flex: 1;
    display: flex;
}
.grp-foot {
    height: 20px;
    margin-bottom: -3px;
    display: flex;
    align-items: center;
    font-size: 15px;
    color: #333;
}
.g-font .grp-foot, .g-align .grp-foot, .g-number .grp-foot {
    margin-left: -12px;
}
.g-styles .grp-foot, .g-edit .grp-foot { margin-left: -20px; }
.g-cells .grp-foot { margin-left: -19px; }
.grp-name {
    flex: 1;
    text-align: center;
}
.launch {
    width: 24px;
    display: flex;
    justify-content: center;
}
.rows2 {
    display: flex;
    flex-direction: column;
    gap: 12px;
    padding-top: 11px;
}
.rows3 {
    display: flex;
    flex-direction: column;
    gap: 3px;
}
.row {
    height: 36px;
    display: flex;
    align-items: center;
}
.paste {
    width: 50px;
    margin-left: 24px;
    margin-right: 14px;
    padding-top: 6px;
    display: flex;
    flex-direction: column;
    align-items: center;
    color: #8a8a8a;
}
.paste-txt { margin-top: 5px; }
.paste .chev { margin-top: 7px; }
.chev-copy { margin-left: 17px; }
.combo {
    height: 36px;
    border: 1px solid #999;
    border-radius: 6px;
    display: flex;
    align-items: center;
    justify-content: space-between;
    padding: 0 4px 0 3px;
    font-size: 17px;
    background: #fff;
}
.combo-font { width: 180px; }
.combo-size { width: 64px; margin-left: 4px; }
.combo-num { width: 135px; height: 35px; margin-top: -2px; color: #1c2b40; }
.grow-a, .shrink-a {
    font-size: 28px;
    line-height: 1;
}
.grow-a { margin-left: 11px; }
.shrink-a { font-size: 23px; margin-left: 17px; }
.grow-a sup, .shrink-a sup {
    font-size: 13px;
    color: #2b7cc7;
    line-height: 0;
    vertical-align: 12px;
    margin-left: -1px;
}
.row-font2 { margin-left: -1px; }
.slot {
    width: 39px;
    height: 36px;
    display: flex;
    align-items: center;
    justify-content: center;
    flex: none;
}
.slot-on {
    position: relative;
}
.slot-on::before {
    content: "";
    position: absolute;
    inset: 0 1px;
    border: 1px solid #8a8a8a;
    border-radius: 6px;
    background: #f0f0f0;
}
.slot-on svg { position: relative; }
.chev-slot {
    width: 18px;
    display: flex;
    justify-content: center;
    flex: none;
}
.fmt-b { font-weight: 700; font-size: 19px; }
.fmt-i { font-style: italic; font-size: 19px; font-family: "Liberation Serif", serif; }
.fmt-u { text-decoration: underline; font-size: 19px; }
.vsep {
    width: 1px;
    height: 36px;
    background: #d0d0d0;
    margin: 0 8px 0 6px;
}
.row-font2 .chev-slot { margin-left: 7px; }
.row-font2 .fmt-u + .chev-slot { margin-left: 0; }
.font-color {
    width: 24px;
    margin-left: 12px;
    display: flex;
    flex-direction: column;
    align-items: center;
    line-height: 1;
}
.font-color b { font-weight: 400; font-size: 22px; }
.font-color i {
    width: 24px;
    height: 6px;
    background: #f00000;
}
.slot-para { margin-left: 7px; font-size: 17px; }
.para-blue { color: #2b7cc7; }
.tall-sep {
    width: 1px;
    height: 94px;
    margin: 9px 16px 0 10px;
    background: #d0d0d0;
}
.wrap-txt {
    font: 14.5px/16.5px "Liberation Sans", sans-serif;
    width: 16px;
}
.wrap-arrow { margin: 12px 0 0 -6px; }
.chev-merge { margin-left: 17px; }
.num-row2 { padding-left: 6px; }
.num-row2 .chev-slot { margin-left: 4px; }
.percent { font-size: 27px; margin-left: 13px; font-weight: 300; }
.comma { margin-left: 23px; }
.num-row3 { padding-left: 6px; gap: 16px; }
.dec {
    width: 23px;
    font: 13.5px/15.5px "Liberation Sans", sans-serif;
    text-align: right;
}
.dec em {
    font-style: normal;
    color: #2b7cc7;
}
.cmd {
    font-size: 17px;
    margin-left: 6px;
}
.cmd-chev {
    margin-left: 5px;
    width: 9px;
}
.chev-ins { margin-left: 27px; }
.chev-del { margin-left: 25px; }
.edit-col { width: 64px; }
.chev-sum { margin-left: 21px; }
.chev-fill { margin-left: 10px; }
.bigbtn {
    display: flex;
    flex-direction: column;
    align-items: center;
    padding-top: 6px;
    line-height: 24px;
    font-size: 17px;
    flex: none;
}
.bigbtn span {
    display: flex;
    align-items: center;
    gap: 4px;
}
.bigicon {
    height: 49px;
    padding-bottom: 5px;
}
.big-sort { width: 69px; }
.big-find { width: 68px; }
.big-add { width: 95px; }
.collapse {
    margin-left: 78px;
    margin-top: 118px;
}

/* formula bar */
.formula {
    margin-top: 12px;
    height: 34px;
    padding: 0 12px;
    display: flex;
    align-items: stretch;
}
.namebox, .fxbox, .finput {
    background: #fff;
    border: 1px solid #d8dce1;
    border-radius: 7px;
    display: flex;
    align-items: center;
}
.namebox {
    width: 151px;
    justify-content: space-between;
    padding: 0 8px 0 6px;
    font-size: 16px;
}
.fdots {
    width: 32px;
    display: flex;
    flex-direction: column;
    align-items: center;
    justify-content: center;
    gap: 3px;
}
.fdots i, .vdots i {
    width: 3px;
    height: 3px;
    background: #555;
    border-radius: 50%;
}
.fxbox {
    width: 108px;
    justify-content: space-around;
    padding: 0 4px;
}
.fx {
    font: italic 22px "Liberation Serif", serif;
    color: #333;
}
.finput {
    flex: 1;
    margin-left: 8px;
    justify-content: flex-end;
    padding-right: 7px;
}

/* sheet */
.sheet {
    margin-top: 11px;
    height: 598px;
    display: flex;
}
.vscroll {
    width: 27px;
    margin-left: 3px;
    background: #f4f5f6;
    border-radius: 8px 0 0 8px;
    display: flex;
    flex-direction: column;
    align-items: center;
    padding: 6px 0;
}
.vthumb {
    width: 12px;
    height: 361px;
    margin-top: auto;
    margin-bottom: 8px;
    border-radius: 6px;
    background: #6e6e6e;
}
.vscroll svg:last-child { margin-bottom: 1px; }
.grid {
    width: 1890px;
    height: 598px;
    table-layout: fixed;
    border-collapse: collapse;
    background: #fff;
    font-family: "DejaVu Sans", sans-serif;
}
.c-ab { width: 148px; }
.c-std { width: 240px; }
.c-x { width: 278px; }
.c-u { width: 226px; }
.c-num { width: 38px; }
.grid td, .grid th {
    padding: 0;
    text-align: center;
}
.letters { height: 25px; }
.letters th {
    background: #efefef;
    border-left: 1px solid #d4d4d4;
    border-bottom: 1px solid #a89f8a;
    font: 400 16.5px "Open Sans", sans-serif;
    color: #333;
}
.letters .col-ab {
    padding-right: 90px;
    border-left: 0;
}
.letters .sel-head {
    background: #d2d2d2;
    color: #1f6b41;
}
.letters .corner {
    padding: 0 0 0 5px;
    border-bottom: 0;
    border-left: 0;
}
.heads { height: 41px; }
.heads td {
    background: #ffd564;
    border: 1px solid #111;
    border-top: 0;
    font-size: 17px;
    font-weight: 700;
    color: #111;
    position: relative;
    white-space: nowrap;
}
.fbtn {
    position: absolute;
    left: 0;
    bottom: 1px;
    width: 25px;
    height: 25px;
    background: #fff;
    border: 1px solid #bbb;
    display: flex;
    align-items: center;
    justify-content: center;
}
.data { height: 39px; }
.data td {
    background: #ffd564;
    border: 1px solid #111;
    font-size: 19.5px;
    line-height: 24px;
    color: #111;
}
.grid .gray { background: #ada8a8; }
.grid .light { background: #ffe08f; }
.grid .dash { padding-left: 148px; font-size: 16px; }
.blank td {
    border: 1px solid #e0e0e0;
}
.r21 { height: 33px; }
.r22 { height: 31px; }
.grid .rownum {
    background: #f0f0f0;
    border: 0;
    border-bottom: 1px solid #cfcfcf;
    border-left: 1px solid #bbb;
    font: 16.5px "Open Sans", sans-serif;
    line-height: 22px;
    color: #333;
    vertical-align: bottom;
}
.grid .sel-num {
    background: #d2d2d2;
    color: #1f6b41;
}
.clip {
    display: flex;
    justify-content: flex-end;
    white-space: nowrap;
}
.heads .clip { padding-right: 59px; }
.grid .num-clip { padding-right: 71px; }
.sel-cell, .cursor-cell { position: relative; }
.sel-box {
    position: absolute;
    inset: -1px;
    border: 2px solid #1f6b41;
}
.sel-box i {
    position: absolute;
    left: -4px;
    bottom: -4px;
    width: 7px;
    height: 7px;
    background: #1f6b41;
    border: 1px solid #fff;
}
.cursor {
    position: absolute;
    left: 160px;
    top: 1px;
    width: 58px;
    height: 58px;
    border-radius: 50%;
    background: rgba(255, 130, 90, .42);
    display: flex;
    align-items: center;
    justify-content: center;
}

/* sheet tabs */
.sheetbar {
    height: 48px;
    display: flex;
    align-items: flex-start;
    border-bottom: 2px solid #cdd1d6;
}
.hscroll {
    width: 709px;
    height: 26px;
    margin: 10px 0 0 29px;
    background: #f2f3f5;
    border-radius: 10px;
    display: flex;
    align-items: center;
    padding: 0 6px 0 7px;
}
.hthumb {
    width: 72px;
    height: 12px;
    margin-left: 386px;
    margin-right: auto;
    border-radius: 6px;
    background: #6e6e6e;
}
.vdots {
    width: 16px;
    height: 26px;
    margin: 11px 0 0 17px;
    display: flex;
    flex-direction: column;
    align-items: center;
    justify-content: center;
    gap: 3px;
}
.addsheet { margin: 15px 0 0 29px; }
.moretabs {
    margin: 12px 0 0 35px;
    font-size: 12px;
    letter-spacing: -1px;
}
.sheet-tabs {
    margin-left: 18px;
    display: flex;
    height: 42px;
    font-family: "DejaVu Sans", sans-serif;
    font-size: 20px;
    flex: none;
    width: 898px;
}
.stab {
    height: 34px;
    margin-top: 9px;
    display: flex;
    align-items: center;
    justify-content: center;
    border-right: 1px solid #cfd3d8;
    white-space: nowrap;
    flex: none;
}
.st-fish {
    width: 175px;
    justify-content: flex-end;
    padding-right: 19px;
}
.st-tax { width: 148px; }
.st-raw {
    width: 164px;
    height: 42px;
    margin: 0 0 0 6px;
    padding-bottom: 5px;
    background: #fff;
    border-right: 0;
    border-radius: 0 0 6px 6px;
    font-weight: 700;
    font-size: 17.5px;
    color: #111;
    position: relative;
}
.st-raw::after {
    content: "";
    position: absolute;
    left: 12px;
    right: 12px;
    bottom: 6px;
    height: 3px;
    background: #0b6e45;
}
.st-work { width: 96px; }
.st-info { width: 178px; }
.st-role { width: 131px; border-right: 0; }
.tabarrow { margin: 9px 0 0 46px; }
.tabarrow2 { margin-left: 39px; }

/* status bar */
.statusbar {
    height: 34px;
    background: #f3f3f3;
    border-bottom: 2px solid #bcc5d3;
    display: flex;
    align-items: center;
    font-size: 14.5px;
    color: #444;
}
.ready { margin-left: 17px; width: 71px; }
.st-acc { margin-left: 24px; }
.acc-txt {
    margin-left: 3px;
    font-weight: 600;
    color: #222;
    font-size: 16px;
    width: 1312px;
    flex: none;
}
.viewbtns {
    display: flex;
    align-self: stretch;
    margin-right: 8px;
    flex: none;
}
.vb {
    width: 60px;
    display: flex;
    align-items: center;
    justify-content: center;
}
.vb-on { background: #dcdcdc; }
.zoom-minus { width: 20px; font-size: 18px; flex: none; }
.zoomtrack {
    width: 148px;
    height: 2px;
    background: #555;
    position: relative;
    flex: none;
}
.zoomtrack i {
    position: absolute;
    left: 64px;
    top: -8px;
    width: 8px;
    height: 18px;
    background: #666;
}
.zoom-plus { width: 30px; text-align: center; font-size: 20px; flex: none; }
.zoom-val { margin-left: 9px; flex: none; }

/* taskbar */
.taskbar {
    height: 71px;
    background: linear-gradient(90deg, #e3ebf5 0, #d6e4f7 40%, #dbe7f6 70%, #e5edf6 100%);
    display: flex;
    align-items: center;
    padding-left: 304px;
}
.app {
    width: 66px;
    height: 57px;
    display: flex;
    align-items: center;
    justify-content: center;
    position: relative;
    flex: none;
}
.app-dot::after {
    content: "";
    position: absolute;
    left: 50%;
    bottom: -1px;
    width: 8px;
    height: 6px;
    margin-left: -4px;
    border-radius: 50%;
    background: #5f6b7a;
}
.app-excel {
    background: #eef3fb;
    border-radius: 6px;
    width: 57px;
    margin: 0 5px;
}
.app-excel::after {
    content: "";
    position: absolute;
    left: 17px;
    bottom: 0;
    width: 24px;
    height: 4px;
    border-radius: 2px;
    background: #0f6cdc;
}
.tsearch {
    width: 325px;
    height: 45px;
    margin: 0 5px 0 7px;
    border-radius: 23px;
    background: #f2f5fb;
    border: 1px solid #c6d0de;
    border-bottom: 2px solid #a9b4c4;
    display: flex;
    align-items: center;
    padding-left: 15px;
    gap: 14px;
    font-size: 19px;
    color: #555;
    flex: none;
}
.tray {
    display: flex;
    align-items: center;
    margin-left: 102px;
}
.tray-cloud { margin-left: 27px; }
.tray-mic { margin-left: 26px; }
.lang {
    width: 50px;
    margin-left: 22px;
    display: flex;
    flex-direction: column;
    align-items: center;
    font-size: 16px;
    line-height: 24px;
}
.tray-wifi { margin-left: 22px; }
.tray-vol { margin-left: 10px; }
.tray-bat { margin-left: 11px; }
.clock {
    width: 117px;
    display: flex;
    flex-direction: column;
    align-items: flex-end;
    font-size: 16.5px;
    line-height: 24px;
}
```
